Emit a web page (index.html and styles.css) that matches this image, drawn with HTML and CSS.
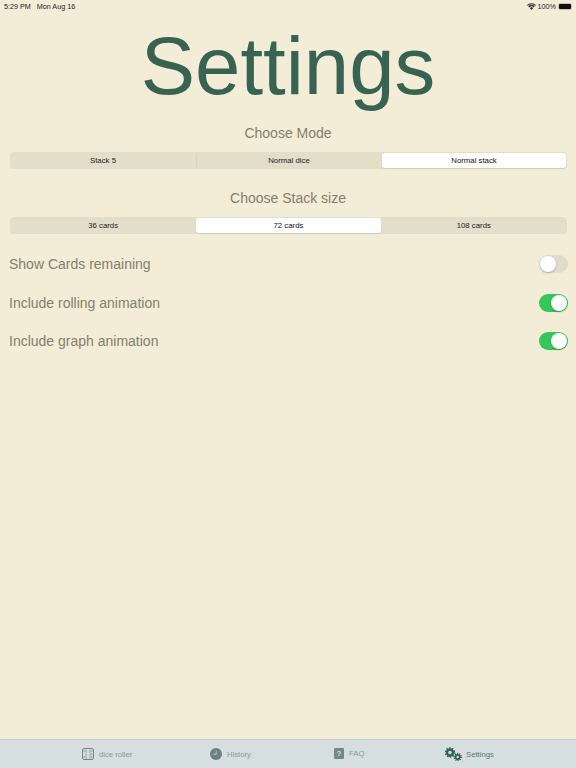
FILE: index.html
```html
<!DOCTYPE html>
<html>

<head>
    <meta charset='utf-8'>
    <title>Settings</title>
    <meta name='viewport' content='width=device-width, initial-scale=1'>
    <link rel="stylesheet" href="styles.css">
</head>

<body>
    <div class="status_bar">
        <div class="status_left">
            <span>5:29 PM</span>
            <span>Mon Aug 16</span>
        </div>
        <div class="status_right">
            <svg class="wifi" viewBox="0 0 12 9" width="9" height="7">
                <path d="M6 9 3.900 6.600a3 3 0 0 1 4.200 0Z" fill="#222" />
                <path d="M3.100 5.700 1.700 4.200a6.200 6.200 0 0 1 8.600 0L8.900 5.700a4.200 4.200 0 0 0-5.800 0Z" fill="#222" />
                <path d="M.9 3.400 0 2.400a8.800 8.800 0 0 1 12 0l-.9 1a7.500 7.500 0 0 0-10.200 0Z" fill="#222" />
            </svg>
            <span>100%</span>
            <div class="battery">
                <div class="battery_fill"></div>
            </div>
        </div>
    </div>

    <h1 class="page_title">Settings</h1>

    <h2 class="section_title title_mode">Choose Mode</h2>
    <div class="segment">
        <div class="segment_item">Stack 5</div>
        <div class="segment_item divider">Normal dice</div>
        <div class="segment_item selected">Normal stack</div>
    </div>

    <h2 class="section_title title_size">Choose Stack size</h2>
    <div class="segment">
        <div class="segment_item">36 cards</div>
        <div class="segment_item selected">72 cards</div>
        <div class="segment_item">108 cards</div>
    </div>

    <ul class="options">
        <li>
            <span>Show Cards remaining</span>
            <div class="toggle"></div>
        </li>
        <li>
            <span>Include rolling animation</span>
            <div class="toggle on"></div>
        </li>
        <li>
            <span>Include graph animation</span>
            <div class="toggle on"></div>
        </li>
    </ul>

    <nav class="tab_bar">
        <a class="tab tab_dice">
            <svg viewBox="0 0 12 12" width="12" height="12">
                <rect x=".5" y=".5" width="11" height="11" rx="1.500" fill="none" stroke="#76878a" />
                <path d="M4 .5v11M8 .5v11" stroke="#76878a" stroke-width=".6" />
                <g fill="#76878a">
                    <circle cx="2.200" cy="3" r=".7" />
                    <circle cx="2.200" cy="9" r=".7" />
                    <circle cx="9.800" cy="3" r=".7" />
                    <circle cx="9.800" cy="6" r=".7" />
                    <circle cx="9.800" cy="9" r=".7" />
                </g>
            </svg>
            <span>dice roller</span>
        </a>
        <a class="tab tab_history">
            <svg viewBox="0 0 12 12" width="12" height="12">
                <circle cx="6" cy="6" r="6" fill="#6c7f82" />
                <path d="M6.200 2.800v3.500H3.400" fill="none" stroke="#d5dfdf" stroke-width=".8" />
            </svg>
            <span>History</span>
        </a>
        <a class="tab tab_faq">
            <div class="faq_icon">?</div>
            <span>FAQ</span>
        </a>
        <a class="tab tab_settings active">
            <svg viewBox="0 0 17 14" width="17" height="14">
                <g fill="none" stroke="#35604e">
                    <circle cx="5" cy="5.500" r="3" stroke-width="2.400" />
                    <circle cx="5" cy="5.500" r="4.500" stroke-width="1.600" stroke-dasharray="1.400 1.430" />
                    <circle cx="12.700" cy="10" r="2.100" stroke-width="1.800" />
                    <circle cx="12.700" cy="10" r="3.500" stroke-width="1.400" stroke-dasharray="1.100 1.100" />
                </g>
            </svg>
            <span>Settings</span>
        </a>
    </nav>
</body>

</html>
```

FILE: styles.css
```css
* {
    margin: 0;
    padding: 0;
    box-sizing: border-box;
}

html,
body {
    height: 100%;
}

body {
    width: 576px;
    height: 768px;
    overflow: hidden;
    display: flex;
    flex-direction: column;
    background-color: #f3edd8;
    font-family: "Liberation Sans", Arial, sans-serif;
}

.status_bar {
    height: 12px;
    padding: 0 4px;
    display: flex;
    justify-content: space-between;
    align-items: center;
    font-size: 7.200px;
    color: #222;
}

.status_left span {
    margin-right: 4px;
}

.status_right {
    display: flex;
    align-items: center;
    gap: 2px;
}

.battery {
    width: 14px;
    height: 7px;
    padding: 1px;
    border-radius: 2px;
    background-color: #c9c5b3;
}

.battery_fill {
    height: 100%;
    border-radius: 1px;
    background-color: #111;
}

.page_title {
    margin-top: 8px;
    height: 92px;
    line-height: 92px;
    text-align: center;
    font-size: 81.500px;
    font-weight: normal;
    color: #386350;
}

.section_title {
    text-align: center;
    font-size: 14px;
    line-height: 16px;
    font-weight: normal;
    color: #847f6c;
}

.title_mode {
    margin-top: 13px;
}

.title_size {
    margin-top: 21px;
}

.segment {
    margin: 11px 9px 0 10px;
    height: 17px;
    padding: 1px;
    display: flex;
    gap: 1px;
    border-radius: 4px;
    background-color: #e3deca;
}

.segment_item {
    flex: 1;
    display: flex;
    justify-content: center;
    align-items: center;
    font-size: 7.800px;
    color: #222;
    border-radius: 3px;
}

.divider {
    border-left: 1px solid #d9d4c0;
}

.selected {
    background-color: #fff;
    color: #111;
    box-shadow: 0 1px 1px rgba(0, 0, 0, 0.08);
}

.options {
    margin-top: 11px;
    padding: 0 8px 0 9px;
    list-style-type: none;
}

.options li {
    height: 38.500px;
    display: flex;
    justify-content: space-between;
    align-items: center;
    font-size: 14px;
    color: #847f6c;
}

.toggle {
    position: relative;
    width: 29px;
    height: 18px;
    border-radius: 9px;
    background-color: #e0dccb;
}

.toggle::after {
    content: "";
    position: absolute;
    top: 1px;
    left: 1px;
    width: 16px;
    height: 16px;
    border-radius: 50%;
    background-color: #fff;
    box-shadow: 0 1px 2px rgba(0, 0, 0, 0.25);
}

.toggle.on {
    background-color: #34c759;
}

.toggle.on::after {
    left: 12px;
}

.tab_bar {
    margin-top: auto;
    height: 29px;
    position: relative;
    display: flex;
    align-items: center;
    border-top: 1px solid #c6d0d0;
    background-color: #d5dfdf;
}

.tab {
    position: absolute;
    top: 8px;
    display: flex;
    align-items: center;
    gap: 5px;
    font-size: 7.700px;
    color: #8b9a9c;
}

.tab_dice {
    left: 82px;
}

.tab_history {
    left: 210px;
}

.tab_faq {
    left: 334px;
}

.tab_settings {
    left: 445px;
    top: 7px;
    gap: 4px;
}

.active {
    color: #5c7a70;
}

.faq_icon {
    width: 10px;
    height: 11px;
    border-radius: 1px;
    background-color: #76878a;
    color: #d5dfdf;
    font-size: 8px;
    font-weight: bold;
    text-align: center;
    line-height: 11px;
}
```
